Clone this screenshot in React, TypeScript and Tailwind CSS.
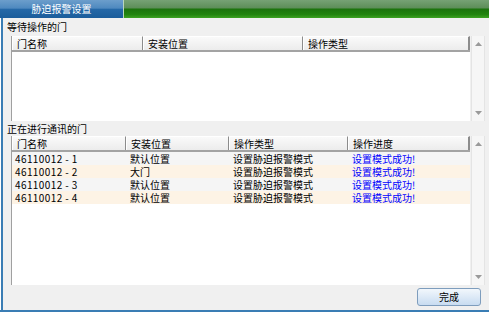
import React from "react";

type Col = { title: string; width: number };

const waitCols: Col[] = [
  { title: "门名称", width: 131 },
  { title: "安装位置", width: 160 },
  { title: "操作类型", width: 167 },
];

const commCols: Col[] = [
  { title: "门名称", width: 114 },
  { title: "安装位置", width: 103 },
  { title: "操作类型", width: 119 },
  { title: "操作进度", width: 122 },
];

const rows = [
  { name: "46110012 - 1", place: "默认位置" },
  { name: "46110012 - 2", place: "大门" },
  { name: "46110012 - 3", place: "默认位置" },
  { name: "46110012 - 4", place: "默认位置" },
];

function Arrow({ up }: { up?: boolean }) {
  return (
    <svg width="7" height="4" viewBox="0 0 7 4">
      <path d={up ? "M0 4 L3.5 0 L7 4 Z" : "M0 0 L3.5 4 L7 0 Z"} fill="#9a9a9a" />
    </svg>
  );
}

function Scrollbar() {
  return (
    <div className="w-[14px] shrink-0 ml-px bg-[#f6f6f6] border-x border-[#e4e4e4] flex flex-col items-center justify-between py-[6px]">
      <Arrow up />
      <Arrow />
    </div>
  );
}

function HeaderRow({ cols }: { cols: Col[] }) {
  return (
    <div className="flex h-[16px] shrink-0 border-b-2 border-[#a3a3a3] bg-linear-to-b from-[#fbfbfb] to-[#ececec]">
      {cols.map((c, i) => (
        <div
          key={c.title}
          style={{ width: c.width }}
          className={
            "flex items-center pl-[4px] leading-[13px] border-l border-l-white border-t border-t-white " +
            (i === cols.length - 1 ? "border-r-2 border-r-[#8c8c8c]" : "border-r border-r-[#8c8c8c]")
          }
        >
          {c.title}
        </div>
      ))}
    </div>
  );
}

export default function App() {
  return (
    <div
      className="w-[489px] h-[312px] bg-[#f0f0f0] flex flex-col overflow-hidden text-[10px] leading-[12px] text-black"
      style={{ fontFamily: '"Noto Sans CJK SC", "Noto Sans", sans-serif' }}
    >
      {/* title bar */}
      <div className="flex h-[18px] shrink-0">
        <div className="w-[123px] flex items-center justify-center text-white bg-[linear-gradient(to_bottom,#6c9ecb_0%,#4f89bf_45%,#2568a7_52%,#1b5d9b_100%)]">
          胁迫报警设置
        </div>
        <div className="w-px bg-[#b9d6bd]" />
        <div className="flex-1 bg-[linear-gradient(to_bottom,#76a274_0%,#5e8f5a_42%,#1c740d_52%,#22840f_80%,#3da223_100%)]" />
      </div>

      {/* body */}
      <div className="flex flex-1 min-h-0">
        <div className="w-px bg-white" />
        <div className="w-[2px] bg-[#3a7db4]" />
        <div className="flex-1 flex flex-col">
          <div className="h-[18px] pl-[4px] flex items-center">等待操作的门</div>
          <div className="ml-[8px] w-[473px] h-[85px] flex">
            <div className="flex-1 flex flex-col bg-white border-l border-[#a0a0a0]">
              <HeaderRow cols={waitCols} />
            </div>
            <Scrollbar />
          </div>

          <div className="h-[15px] pl-[4px] flex items-center">正在进行通讯的门</div>
          <div className="ml-[8px] w-[473px] h-[149px] flex">
            <div className="flex-1 flex flex-col bg-white border-l border-[#a0a0a0]">
              <HeaderRow cols={commCols} />
              {rows.map((r, i) => (
                <div
                  key={r.name}
                  className={"flex h-[13px] items-center leading-[12px] " + (i % 2 === 0 ? "bg-[#f5f5f5]" : "bg-[#fdf3e5]")}
                >
                  <div style={{ width: commCols[0].width }} className="pl-[3px] tracking-[0.4px]">{r.name}</div>
                  <div style={{ width: commCols[1].width }} className="pl-[4px]">{r.place}</div>
                  <div style={{ width: commCols[2].width }} className="pl-[4px]">设置胁迫报警模式</div>
                  <div style={{ width: commCols[3].width }} className="pl-[4px] text-[#0000ff]">设置模式成功!</div>
                </div>
              ))}
            </div>
            <Scrollbar />
          </div>

          <div className="flex-1 flex justify-end items-start pt-[3px] pr-[8px]">
            <button className="w-[64px] h-[18px] rounded-[3px] border border-[#7e9dbd] bg-linear-to-b from-[#f2f7fc] to-[#c8dcf1] flex items-center justify-center text-[10px]">
              完成
            </button>
          </div>
        </div>
      </div>
      <div className="h-[2px] shrink-0 bg-[#3a7db4]" />
    </div>
  );
}
